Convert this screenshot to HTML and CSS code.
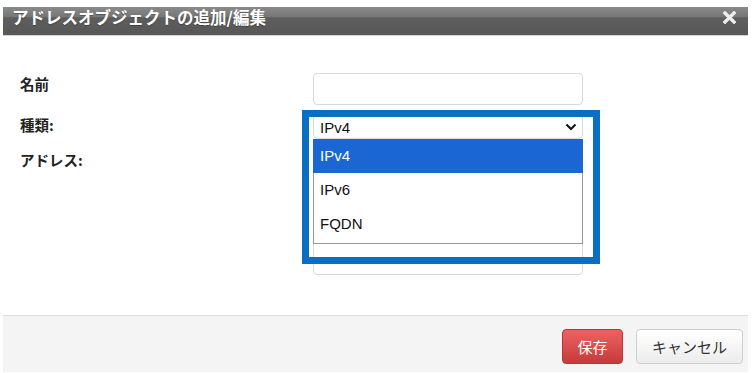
FILE: index.html
```html
<!DOCTYPE html>
<html lang="ja">
<head>
  <meta charset="UTF-8">
  <title>アドレスオブジェクトの追加/編集</title>
  <meta name="viewport" content="width=device-width, initial-scale=1.0">
  <link rel="stylesheet" href="styles.css">
</head>
<body>
  <div class="dialog">
    <div class="dialog-header">
      <span class="dialog-title">アドレスオブジェクトの追加/編集</span>
      <svg class="close-icon" width="13" height="13" viewBox="0 0 13 13">
        <path d="M2 2 L11 11 M11 2 L2 11" stroke="#ececec" stroke-width="3.4" stroke-linecap="square"/>
      </svg>
    </div>

    <div class="dialog-body">
      <div class="form-row row-name">
        <label class="form-label">名前</label>
        <input type="text" class="text-input">
      </div>

      <div class="form-row row-type">
        <label class="form-label">種類:</label>
        <div class="select-wrap">
          <div class="select-box">
            <span>IPv4</span>
            <svg width="12" height="8" viewBox="0 0 12 8">
              <path d="M1.5 1.5 L6 6 L10.5 1.5" fill="none" stroke="#111" stroke-width="2"/>
            </svg>
          </div>
          <ul class="select-list">
            <li class="selected">IPv4</li>
            <li>IPv6</li>
            <li>FQDN</li>
          </ul>
        </div>
      </div>

      <div class="form-row row-address">
        <label class="form-label">アドレス:</label>
        <textarea class="text-area"></textarea>
      </div>

      <div class="highlight"></div>
    </div>

    <div class="dialog-footer">
      <button class="btn btn-save">保存</button>
      <button class="btn btn-cancel">キャンセル</button>
    </div>
  </div>
</body>
</html>
```

FILE: styles.css
```css
body {
  margin: 0;
  background-color: #fff;
  font-family: "Noto Sans CJK JP", "Liberation Sans", sans-serif;
  color: #222;
}

.dialog {
  margin: 7px 0 0 3px;
  width: 745px;
  background-color: #fff;
}

.dialog-header {
  display: flex;
  justify-content: space-between;
  height: 28px;
  padding: 0 12px 0 9px;
  background: linear-gradient(#8a8a8a 0%, #767676 36%, #5e5e5e 38%, #575757 100%);
  border-bottom: 1px solid #d4d4d4;
}

.dialog-title {
  font-size: 16.5px;
  font-weight: bold;
  line-height: 20px;
  color: #fff;
  text-shadow: 0 1px 1px rgba(0, 0, 0, 0.3);
}

.close-icon {
  margin-top: 4px;
}

.dialog-body {
  position: relative;
  height: 279px;
  box-sizing: border-box;
  padding-top: 37px;
}

.form-row {
  display: flex;
}

.form-label {
  box-sizing: border-box;
  width: 310px;
  padding-left: 17px;
  font-size: 14.5px;
  font-weight: bold;
  line-height: 20px;
  color: #222;
}

.row-name {
  height: 32px;
  margin-bottom: 10px;
}

.row-name .form-label {
  padding-top: 1px;
}

.text-input {
  box-sizing: border-box;
  width: 270px;
  height: 32px;
  margin: 0;
  border: 1px solid #d8d8d8;
  border-radius: 4px;
}

.row-type {
  height: 24px;
  margin-bottom: 7px;
}

.select-wrap {
  position: relative;
  width: 270px;
}

.select-box {
  display: flex;
  justify-content: space-between;
  align-items: center;
  box-sizing: border-box;
  height: 24px;
  padding: 0 5px 0 6px;
  border: 1px solid #d8d8d8;
  border-radius: 4px;
  font-family: "Liberation Sans", Arial, sans-serif;
  font-size: 15px;
  color: #111;
}

.select-list {
  position: absolute;
  top: 24px;
  left: 0;
  z-index: 1;
  box-sizing: border-box;
  width: 270px;
  height: 105px;
  margin: 0;
  padding: 0;
  list-style: none;
  background-color: #fff;
  border: 1px solid #9a9a9a;
  border-top: none;
}

.select-list li {
  height: 34px;
  padding-left: 6px;
  font-family: "Liberation Sans", Arial, sans-serif;
  font-size: 15px;
  line-height: 34px;
  color: #111;
}

.select-list li.selected {
  margin: 0 -1px;
  padding-left: 7px;
  background-color: #1a66d2;
  color: #fff;
}

.row-address .form-label {
  padding-top: 4px;
}

.text-area {
  box-sizing: border-box;
  width: 270px;
  height: 129px;
  margin: 0;
  border: 1px solid #d8d8d8;
  border-radius: 4px;
  resize: none;
}

.highlight {
  position: absolute;
  left: 299px;
  top: 74px;
  z-index: 2;
  box-sizing: border-box;
  width: 298px;
  height: 154px;
  border: 7px solid #0a6fc1;
}

.dialog-footer {
  display: flex;
  justify-content: flex-end;
  gap: 13px;
  height: 57px;
  box-sizing: border-box;
  padding: 13px 5px 0 0;
  background-color: #f4f4f4;
  border-top: 1px solid #dcdcdc;
}

.btn {
  height: 35px;
  padding: 0 15px;
  font-family: "Noto Sans CJK JP", sans-serif;
  font-size: 15px;
  border-radius: 4px;
  cursor: pointer;
}

.btn-save {
  width: 61px;
  padding: 0;
  color: #fff;
  background: linear-gradient(#ec6262, #c73a3a);
  border: 1px solid #b83535;
}

.btn-cancel {
  width: 107px;
  padding: 0;
  color: #333;
  background: linear-gradient(#fff, #ececec);
  border: 1px solid #cfcfcf;
}
```
